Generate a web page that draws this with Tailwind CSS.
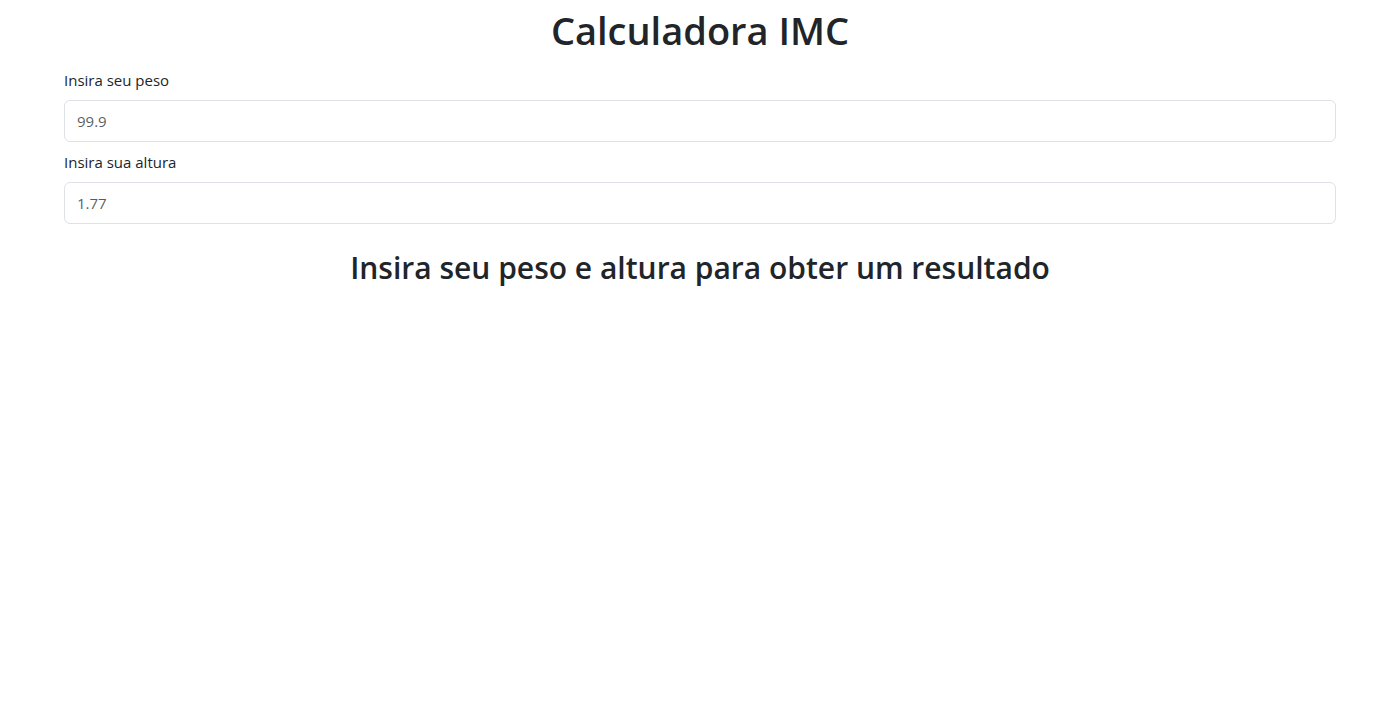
<!DOCTYPE html>
<html lang="pt-BR">
<head>
<meta charset="utf-8">
<meta name="viewport" content="width=device-width, initial-scale=1">
<title>Calculadora IMC</title>
<script src="https://cdn.jsdelivr.net/npm/@tailwindcss/browser@4"></script>
</head>
<body class="bg-white font-['Segoe_UI','Open_Sans',sans-serif] text-base text-[#212529]">
<main class="pl-16 pr-14 pt-1.5">
<h1 class="mb-3.5 text-center text-[38px] leading-12 font-semibold">Calculadora IMC</h1>
<form>
<label for="peso" class="mb-2 block text-[15px] leading-6">Insira seu peso</label>
<input id="peso" type="text" inputmode="decimal" placeholder="99.9" class="mb-2 block h-[42px] w-full rounded-md border border-[#dee2e6] px-3 text-[15px] placeholder:text-[#212529]/75">
<label for="altura" class="mb-2 block text-[15px] leading-6">Insira sua altura</label>
<input id="altura" type="text" inputmode="decimal" placeholder="1.77" class="mb-6 block h-[42px] w-full rounded-md border border-[#dee2e6] px-3 text-[15px] placeholder:text-[#212529]/75">
</form>
<h2 class="text-center text-[30px] leading-10 font-semibold">Insira seu peso e altura para obter um resultado</h2>
</main>
</body>
</html>
